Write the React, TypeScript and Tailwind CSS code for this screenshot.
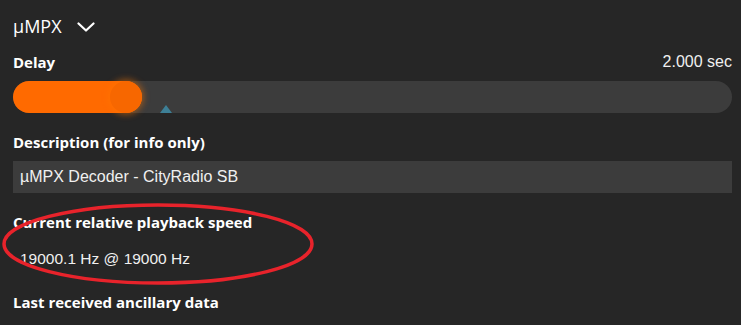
import React from 'react';

const label = "font-['Open_Sans',sans-serif] text-[15px] font-bold text-white leading-[20px]";
const valueFont = "font-['Liberation_Sans',Arial,sans-serif] text-[#f0f0f0]";

export default function App() {
  return (
    <div className="relative h-[325px] w-[741px] overflow-hidden bg-[#262626] pl-[13px] pr-[9px]">
      {/* header */}
      <div className="flex h-[52px] items-center gap-[15px] pt-[1px]">
        <span className="font-['Open_Sans',sans-serif] text-[18px] text-white">µMPX</span>
        <svg width="18" height="18" viewBox="0 0 18 18" fill="none">
          <path d="M1.5 5.5l7.5 7 7.5-7" stroke="white" strokeWidth="2.2" strokeLinecap="round" strokeLinejoin="round" />
        </svg>
      </div>

      {/* delay */}
      <div className="flex items-end justify-between">
        <span className={label}>Delay</span>
        <span className={valueFont + ' text-[16px] leading-[20px]'}>2.000 sec</span>
      </div>
      <div className="relative mt-[9px] h-[32px] rounded-full bg-[#3c3c3c]">
        <div className="h-full w-[129px] rounded-full bg-[#ff6a00]" />
        <div className="absolute left-[97px] top-0 h-[32px] w-[32px] rounded-full bg-[#f76700] shadow-[0_0_6px_2px_rgba(255,120,0,0.45)]" />
        <svg className="absolute left-[147px] top-[24px]" width="12" height="8" viewBox="0 0 12 8">
          <path d="M6 0L12 8H0z" fill="#3d7f96" />
        </svg>
      </div>

      {/* description */}
      <div className={label + ' mt-[19px]'}>Description (for info only)</div>
      <div className="mt-[9px] flex h-[32px] items-center bg-[#3c3c3c] pl-[7px]">
        <span className={valueFont + ' text-[16px]'}>µMPX Decoder - CityRadio SB</span>
      </div>

      {/* playback speed */}
      <div className={label + ' mt-[19px]'}>Current relative playback speed</div>
      <div className="mt-[11px] flex h-[32px] items-center pl-[7px]">
        <span className={valueFont + ' text-[15.5px]'}>19000.1 Hz @ 19000 Hz</span>
      </div>

      {/* ancillary */}
      <div className={label + ' mt-[17px]'}>Last received ancillary data</div>

      {/* red annotation */}
      <svg className="pointer-events-none absolute left-0 top-0" width="741" height="325">
        <ellipse cx="158" cy="244" rx="154" ry="39" fill="none" stroke="#e8232b" strokeWidth="3.5" />
      </svg>
    </div>
  );
}
